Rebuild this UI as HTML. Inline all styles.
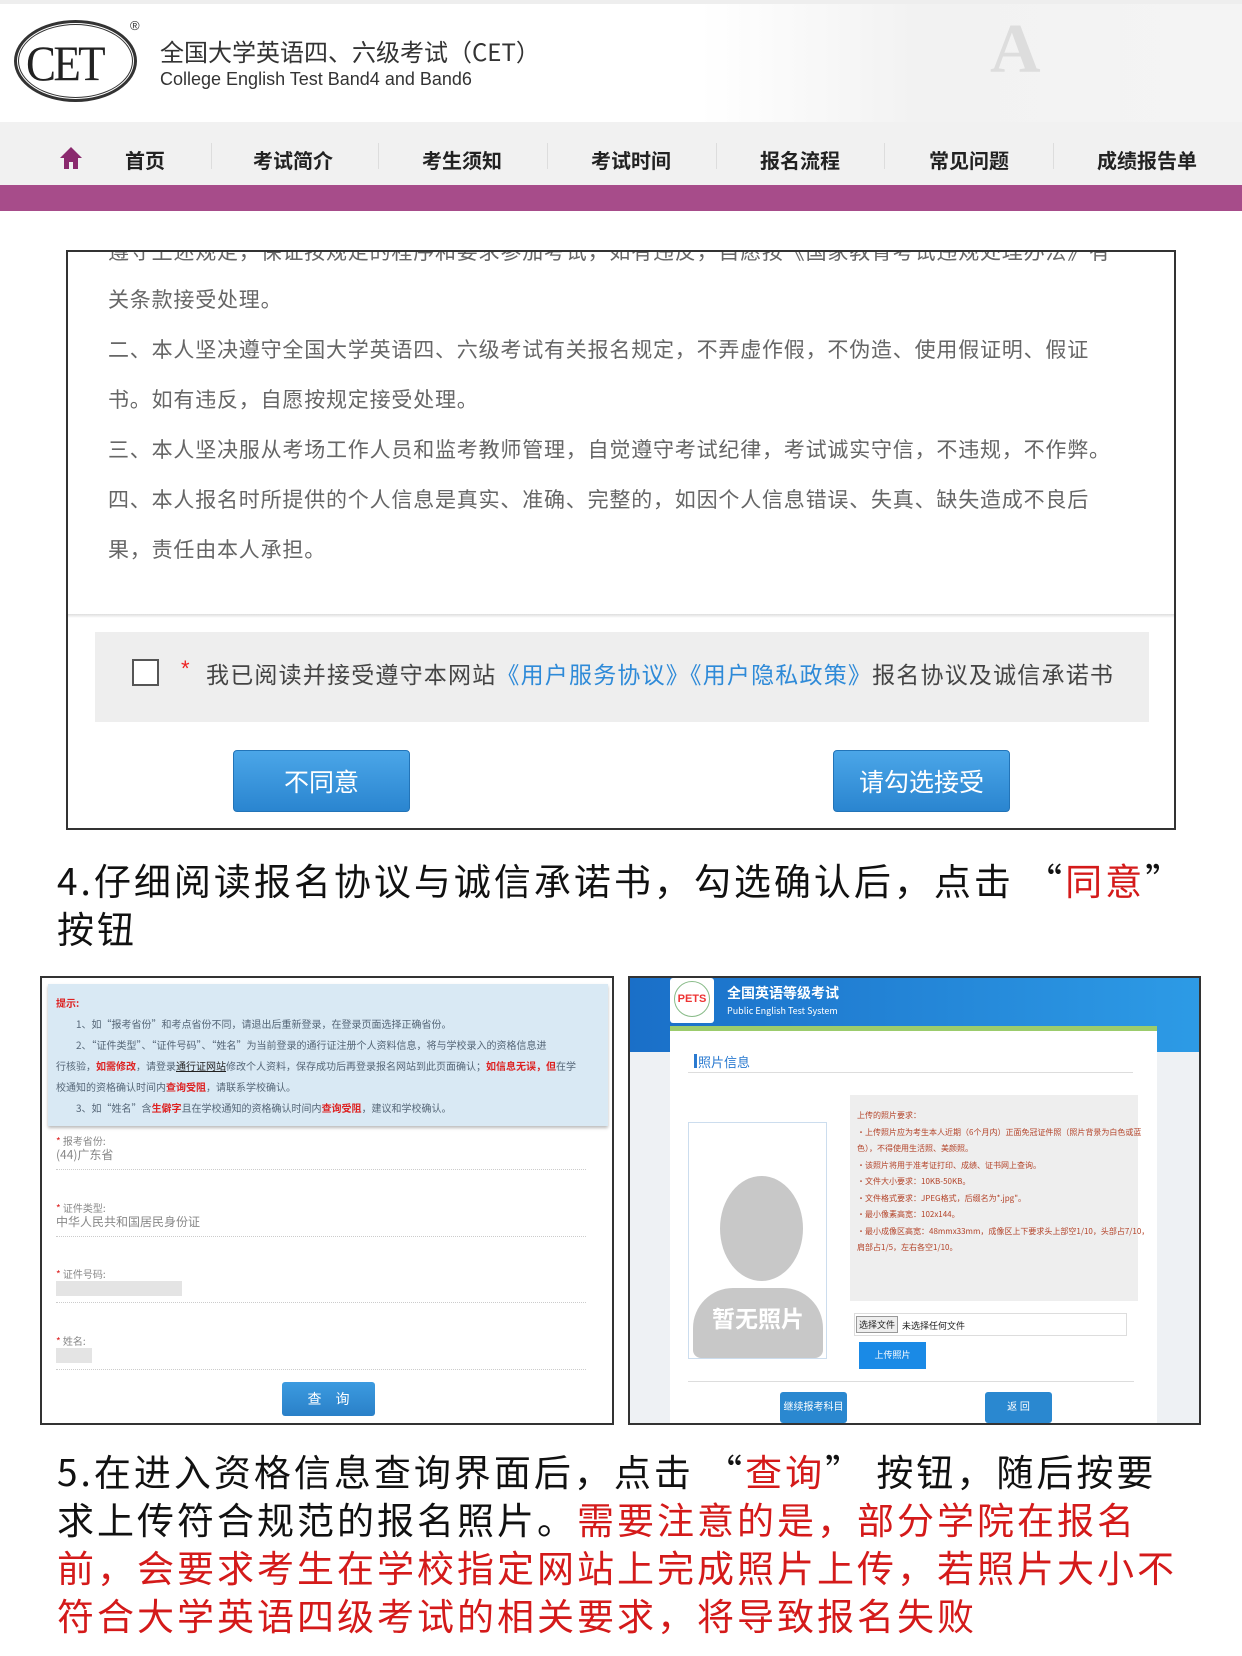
<!DOCTYPE html>
<html><head><meta charset="utf-8">
<style>
*{margin:0;padding:0;box-sizing:border-box}
body{width:1242px;height:1656px;background:#fff;position:relative;overflow:hidden;font-family:"Liberation Sans","Noto Sans CJK SC",sans-serif}
.abs{position:absolute}
.cn{font-family:"Noto Sans CJK SC",sans-serif}
.nav span{position:absolute;top:145px;font-size:20px;font-weight:bold;color:#222;font-family:"Noto Sans CJK SC",sans-serif}
.sep{position:absolute;top:143px;width:1px;height:26px;background:#ddd}
.t{position:absolute;left:108px;font-size:21px;color:#666;font-family:"Noto Sans CJK SC",sans-serif;white-space:nowrap;letter-spacing:0.8px}
.btn{position:absolute;background:linear-gradient(#4ba6e8,#2a85d0);border:1px solid #2274b8;border-radius:4px;color:#fff;font-size:25px;text-align:center;font-family:"Noto Sans CJK SC",sans-serif}
.cap{position:absolute;left:57px;font-size:37px;color:#111;font-family:"Noto Sans CJK SC",sans-serif;white-space:nowrap;line-height:48px;letter-spacing:3px}
.r{color:#d41a1a}
.s{font-size:10px;position:absolute;white-space:nowrap;font-family:"Noto Sans CJK SC",sans-serif}
</style></head><body>
<div class="abs" style="left:0;top:0;width:1242px;height:4px;background:#eee"></div>
<div class="abs" style="left:700px;top:4px;width:542px;height:120px;background:linear-gradient(90deg,#fff,#f2f2f2 40%,#f4f4f4)"></div>
<div class="abs" style="left:990px;top:10px;font-size:70px;color:#ddd;font-family:'Liberation Serif',serif;font-weight:bold">A</div>
<div class="abs" style="left:14px;top:20px;width:123px;height:82px;border:3px solid #333;border-radius:50%"></div>
<div class="abs" style="left:18px;top:24px;width:115px;height:74px;border:1px solid #333;border-radius:50%"></div>
<div class="abs" style="left:26px;top:34px;font-size:50px;font-family:'Liberation Serif',serif;color:#222;letter-spacing:-3px;transform:scaleX(0.9);transform-origin:left">CET</div>
<div class="abs" style="left:130px;top:18px;font-size:13px;color:#333">®</div>
<div class="abs cn" style="left:160px;top:33px;font-size:24px;color:#333">全国大学英语四、六级考试（CET）</div>
<div class="abs" style="left:160px;top:69px;font-size:18px;color:#333">College English Test Band4 and Band6</div>
<div class="abs" style="left:0;top:122px;width:1242px;height:63px;background:#f1f1f1"></div>
<svg class="abs" style="left:59px;top:146px" width="24" height="24" viewBox="0 0 24 24"><path d="M12 1L1 12h4v11h5v-7h4v7h5V12h4z" fill="#8a2a6e"/></svg>
<div class="nav">
<span style="left:125px">首页</span><div class="sep" style="left:211px"></div>
<span style="left:253px">考试简介</span><div class="sep" style="left:378px"></div>
<span style="left:422px">考生须知</span><div class="sep" style="left:547px"></div>
<span style="left:591px">考试时间</span><div class="sep" style="left:716px"></div>
<span style="left:760px">报名流程</span><div class="sep" style="left:884px"></div>
<span style="left:929px">常见问题</span><div class="sep" style="left:1053px"></div>
<span style="left:1097px">成绩报告单</span>
</div>
<div class="abs" style="left:0;top:185px;width:1242px;height:26px;background:#a74c8a"></div>

<div class="abs" style="left:66px;top:250px;width:1110px;height:580px;border:2px solid #333;background:#fff;overflow:hidden">
<div class="t" style="left:40px;top:-16px">遵守上述规定，保证按规定的程序和要求参加考试，如有违反，自愿按《国家教育考试违规处理办法》有</div>
<div class="t" style="left:40px;top:32px">关条款接受处理。</div>
<div class="t" style="left:40px;top:82px">二、本人坚决遵守全国大学英语四、六级考试有关报名规定，不弄虚作假，不伪造、使用假证明、假证</div>
<div class="t" style="left:40px;top:132px">书。如有违反，自愿按规定接受处理。</div>
<div class="t" style="left:40px;top:182px">三、本人坚决服从考场工作人员和监考教师管理，自觉遵守考试纪律，考试诚实守信，不违规，不作弊。</div>
<div class="t" style="left:40px;top:232px">四、本人报名时所提供的个人信息是真实、准确、完整的，如因个人信息错误、失真、缺失造成不良后</div>
<div class="t" style="left:40px;top:282px">果，责任由本人承担。</div>
<div class="abs" style="left:0;top:362px;width:1110px;height:4px;background:linear-gradient(#ddd,#fff)"></div>
<div class="abs" style="left:27px;top:380px;width:1054px;height:90px;background:#eee"></div>
<div class="abs" style="left:64px;top:407px;width:27px;height:27px;border:2px solid #555;background:#fff"></div>
<div class="abs" style="left:113px;top:404px;color:#e22;font-size:22px">*</div>
<div class="abs cn" style="left:138px;top:404px;font-size:23px;color:#444;white-space:nowrap;letter-spacing:1.2px">我已阅读并接受遵守本网站<span style="color:#2e8ad8">《用户服务协议》《用户隐私政策》</span>报名协议及诚信承诺书</div>
<div class="btn" style="left:165px;top:498px;width:177px;height:62px;line-height:60px">不同意</div>
<div class="btn" style="left:765px;top:498px;width:177px;height:62px;line-height:60px">请勾选接受</div>
</div>

<div class="cap" style="top:855px">4.仔细阅读报名协议与诚信承诺书，勾选确认后，点击 “<span class="r">同意</span>”</div>
<div class="cap" style="top:903px">按钮</div>

<div class="abs" style="left:40px;top:976px;width:574px;height:449px;border:2px solid #333;background:#fff;overflow:hidden">
<div class="abs" style="left:6px;top:6px;width:560px;height:142px;background:#d9e9f4;box-shadow:0 2px 3px #bbb"></div>
<div class="s" style="left:14px;top:17px;color:#d22;font-weight:bold">提示:</div>
<div class="s" style="left:34px;top:38px;color:#567">1、如“报考省份”和考点省份不同，请退出后重新登录，在登录页面选择正确省份。</div>
<div class="s" style="left:34px;top:59px;color:#567">2、“证件类型”、“证件号码”、“姓名”为当前登录的通行证注册个人资料信息，将与学校录入的资格信息进</div>
<div class="s" style="left:14px;top:80px;color:#567">行核验，<b style="color:#d22">如需修改</b>，请登录<u style="color:#222">通行证网站</u>修改个人资料，保存成功后再登录报名网站到此页面确认；<b style="color:#d22">如信息无误，但</b>在学</div>
<div class="s" style="left:14px;top:101px;color:#567">校通知的资格确认时间内<b style="color:#d22">查询受阻</b>，请联系学校确认。</div>
<div class="s" style="left:34px;top:122px;color:#567">3、如“姓名”含<b style="color:#d22">生僻字</b>且在学校通知的资格确认时间内<b style="color:#d22">查询受阻</b>，建议和学校确认。</div>
<div class="s" style="left:14px;top:155px;color:#888"><span style="color:#d22">*</span> 报考省份:</div>
<div class="s" style="left:14px;top:168px;color:#888;font-size:12px">(44)广东省</div>
<div class="abs" style="left:14px;top:191px;width:530px;border-top:1px dotted #ccc"></div>
<div class="s" style="left:14px;top:222px;color:#888"><span style="color:#d22">*</span> 证件类型:</div>
<div class="s" style="left:14px;top:235px;color:#888;font-size:12px">中华人民共和国居民身份证</div>
<div class="abs" style="left:14px;top:258px;width:530px;border-top:1px dotted #ccc"></div>
<div class="s" style="left:14px;top:288px;color:#888"><span style="color:#d22">*</span> 证件号码:</div>
<div class="abs" style="left:14px;top:303px;width:126px;height:15px;background:#e4e4e4"></div>
<div class="abs" style="left:14px;top:324px;width:530px;border-top:1px dotted #ccc"></div>
<div class="s" style="left:14px;top:355px;color:#888"><span style="color:#d22">*</span> 姓名:</div>
<div class="abs" style="left:14px;top:370px;width:36px;height:15px;background:#e4e4e4"></div>
<div class="abs" style="left:14px;top:391px;width:530px;border-top:1px dotted #ccc"></div>
<div class="abs cn" style="left:240px;top:404px;width:93px;height:34px;background:linear-gradient(#3c9be0,#2a80c8);border-radius:3px;color:#fff;font-size:14px;text-align:center;line-height:34px">查　询</div>
</div>

<div class="abs" style="left:628px;top:976px;width:573px;height:449px;border:2px solid #333;background:#eef1f4;overflow:hidden">
<div class="abs" style="left:0;top:0;width:573px;height:74px;background:linear-gradient(90deg,#1a6fc8,#2d9be6)"></div>
<div class="abs" style="left:40px;top:0;width:44px;height:45px;background:#fff;border-radius:3px"></div>
<div class="abs" style="left:44px;top:3px;width:36px;height:36px;border:1px solid #8b8;border-radius:50%;font-size:11px;font-weight:bold;color:#e33;text-align:center;line-height:34px">PETS</div>
<div class="s" style="left:97px;top:5px;color:#fff;font-size:14px;font-weight:bold">全国英语等级考试</div>
<div class="s" style="left:97px;top:26px;color:#fff;font-size:9px">Public English Test System</div>
<div class="abs" style="left:40px;top:48px;width:487px;height:401px;background:#fff;border-top:5px solid #9ccc6c"></div>
<div class="abs" style="left:64px;top:76px;width:3px;height:14px;background:#2a7ad0"></div>
<div class="s" style="left:68px;top:74px;color:#2a7ad0;font-size:13px">照片信息</div>
<div class="abs" style="left:58px;top:94px;width:445px;border-top:1px solid #ddd"></div>
<div class="abs" style="left:58px;top:144px;width:139px;height:237px;border:1px solid #cde"></div>
<div class="abs" style="left:90px;top:198px;width:83px;height:105px;background:#c8c8c8;border-radius:50%"></div>
<div class="abs" style="left:63px;top:310px;width:130px;height:70px;background:#c8c8c8;border-radius:40px 40px 8px 8px"></div>
<div class="s" style="left:82px;top:322px;color:#fff;font-size:23px;font-weight:bold">暂无照片</div>
<div class="abs" style="left:220px;top:117px;width:288px;height:206px;background:#eee"></div>
<div class="s" style="left:227px;top:130px;color:#b4442a;font-size:8px;line-height:16.5px">上传的照片要求：<br>·上传照片应为考生本人近期（6个月内）正面免冠证件照（照片背景为白色或蓝<br>色），不得使用生活照、美颜照。<br>·该照片将用于准考证打印、成绩、证书网上查询。<br>·文件大小要求：10KB-50KB。<br>·文件格式要求：JPEG格式，后缀名为*.jpg"。<br>·最小像素高宽：102x144。<br>·最小成像区高宽：48mmx33mm，成像区上下要求头上部空1/10，头部占7/10，<br>肩部占1/5，左右各空1/10。</div>
<div class="abs" style="left:224px;top:335px;width:273px;height:23px;border:1px solid #ddd"></div>
<div class="s" style="left:226px;top:338px;padding:1px 2px;border:1px solid #999;background:#eee;color:#222;font-size:9px">选择文件</div>
<div class="s" style="left:272px;top:341px;color:#222;font-size:9px">未选择任何文件</div>
<div class="abs" style="left:229px;top:364px;width:67px;height:27px;background:#1a8ae6;color:#fff;font-size:9px;text-align:center;line-height:27px">上传照片</div>
<div class="abs" style="left:58px;top:403px;width:446px;border-top:1px solid #ddd"></div>
<div class="abs" style="left:150px;top:414px;width:67px;height:31px;background:#2a88d0;border-radius:3px;color:#fff;font-size:10px;text-align:center;line-height:31px">继续报考科目</div>
<div class="abs" style="left:355px;top:414px;width:67px;height:31px;background:#2a88d0;border-radius:3px;color:#fff;font-size:10px;text-align:center;line-height:31px">返 回</div>
</div>

<div class="cap" style="top:1446px">5.在进入资格信息查询界面后，点击 “<span class="r">查询</span>” 按钮，随后按要</div>
<div class="cap" style="top:1494px">求上传符合规范的报名照片。<span class="r">需要注意的是，部分学院在报名</span></div>
<div class="cap r" style="top:1542px">前，会要求考生在学校指定网站上完成照片上传，若照片大小不</div>
<div class="cap r" style="top:1590px">符合大学英语四级考试的相关要求，将导致报名失败</div>
</body></html>
